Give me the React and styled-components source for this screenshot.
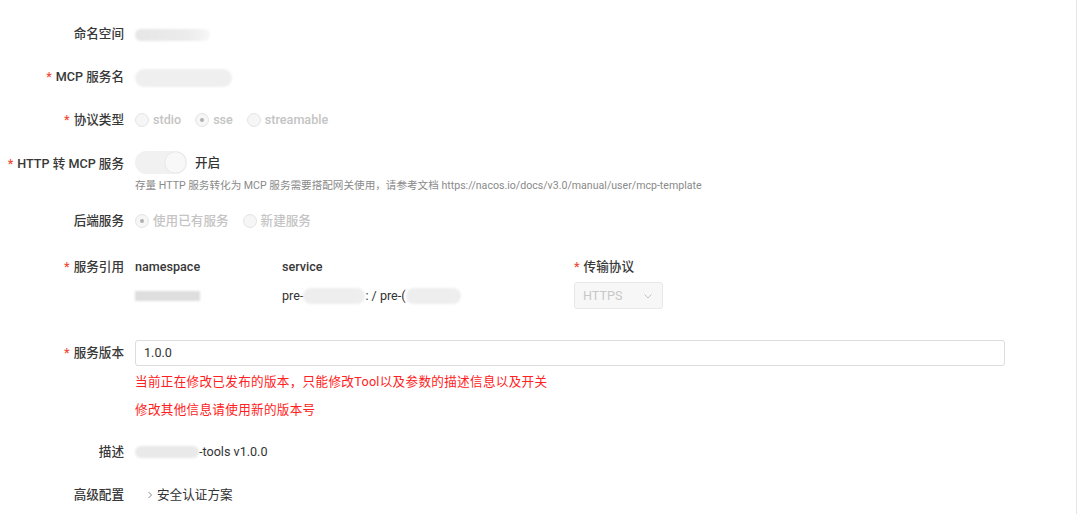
import React from "react";
import styled, { createGlobalStyle } from "styled-components";

const GlobalStyle = createGlobalStyle`
  html, body {
    margin: 0;
    padding: 0;
    background: #fff;
  }
  body {
    font-family: Roboto, "Noto Sans CJK SC", "Liberation Sans", sans-serif;
    font-size: 12.6px;
    color: #333;
  }
`;

const Page = styled.div`
  width: 1077px;
  min-height: 514px;
  border-right: 1px solid #e6e6e6;
  box-sizing: border-box;
  padding-top: 24px;
`;

const Item = styled.div`
  display: flex;
  align-items: flex-start;
  margin-bottom: ${(p) => p.$mb || 0}px;
`;

const Label = styled.div`
  width: 124px;
  margin-right: 11px;
  flex-shrink: 0;
  text-align: right;
  line-height: ${(p) => p.$lh || 20}px;
  padding-top: ${(p) => p.$pt || 0}px;
  font-weight: 500;
  color: #383838;
  white-space: nowrap;
`;

const Star = styled.span`
  color: #f04a35;
  margin-right: 4px;
  font-weight: 500;
`;

const Control = styled.div`
  flex: 1;
  line-height: 20px;
  min-width: 0;
`;

const Blur = styled.span`
  display: inline-block;
  vertical-align: middle;
  width: ${(p) => p.$w}px;
  height: ${(p) => p.$h}px;
  border-radius: ${(p) => p.$r || 0}px;
  background: ${(p) => p.$bg || "#ececec"};
  filter: blur(1px);
`;

const RadioGroup = styled.div`
  display: flex;
  align-items: center;
  height: 20px;
`;

const RadioItem = styled.label`
  display: flex;
  align-items: center;
  margin-right: 14px;
  color: #c4c4c4;
  font-weight: 500;
`;

const RadioCircle = styled.span`
  width: 14px;
  height: 14px;
  border-radius: 50%;
  border: 1px solid #e4e4e4;
  background: #f6f6f6;
  box-sizing: border-box;
  margin-right: 4px;
  display: flex;
  align-items: center;
  justify-content: center;
  &::after {
    content: "";
    display: ${(p) => (p.$checked ? "block" : "none")};
    width: 4px;
    height: 4px;
    border-radius: 50%;
    background: #b0b0b0;
  }
`;

const SwitchRow = styled.div`
  display: flex;
  align-items: center;
  height: 23px;
`;

const Switch = styled.span`
  width: 52px;
  height: 23px;
  border-radius: 12px;
  background: #f1f1f1;
  display: flex;
  align-items: center;
  justify-content: flex-end;
  padding: 1px;
  box-sizing: border-box;
  &::after {
    content: "";
    width: 21px;
    height: 21px;
    border-radius: 50%;
    background: #f8f8f8;
    box-shadow: 0 0 1px rgba(0, 0, 0, 0.18);
  }
`;

const SwitchText = styled.span`
  margin-left: 8px;
  font-weight: 500;
  color: #333;
`;

const Help = styled.div`
  margin-top: 4px;
  font-size: 10.6px;
  line-height: 16px;
  color: #8a8a8a;
  white-space: nowrap;
`;

const RefGrid = styled.div`
  display: grid;
  grid-template-columns: 147px 292px auto;
  grid-template-rows: 20px 27px;
  row-gap: 5px;
  align-items: center;
`;

const ColHead = styled.div`
  font-weight: 500;
  color: #383838;
`;

const Cell = styled.div`
  display: flex;
  align-items: center;
  color: #333;
`;

const Select = styled.div`
  width: 89px;
  height: 27px;
  box-sizing: border-box;
  border: 1px solid #e8e8e8;
  border-radius: 3px;
  background: #f7f7f7;
  display: flex;
  align-items: center;
  justify-content: space-between;
  padding: 0 9px 0 8px;
  color: #c8c8c8;
`;

const Input = styled.div`
  width: 870px;
  height: 26px;
  box-sizing: border-box;
  border: 1px solid #dcdcdc;
  border-radius: 3px;
  display: flex;
  align-items: center;
  padding-left: 8px;
  color: #333;
`;

const Warn = styled.div`
  color: #ff2121;
  line-height: 20px;
  letter-spacing: 0.3px;
  margin-top: ${(p) => p.$mt}px;
`;

const Collapse = styled.div`
  display: flex;
  align-items: center;
  padding-left: 10px;
  color: #333;
`;

const CollapseTitle = styled.span`
  margin-left: 2px;
`;

const Chevron = ({ dir = "down", size = 10, color = "#c4c4c4" }) => (
  <svg width={size} height={size} viewBox="0 0 10 10" fill="none">
    {dir === "down" ? (
      <path d="M1.5 3.5 L5 7 L8.5 3.5" stroke={color} strokeWidth="1" />
    ) : (
      <path d="M3.5 2 L6.5 5 L3.5 8" stroke={color} strokeWidth="1" />
    )}
  </svg>
);

const Radio = ({ checked, children }) => (
  <RadioItem>
    <RadioCircle $checked={checked} />
    {children}
  </RadioItem>
);

export default function App() {
  return (
    <>
      <GlobalStyle />
      <Page>
        <Item $mb={23}>
          <Label>命名空间</Label>
          <Control>
            <Blur
              $w={75}
              $h={12}
              $r={6}
              $bg="linear-gradient(90deg, #e6e6e6 0%, #ececec 70%, #f7f7f7 100%)"
            />
          </Control>
        </Item>

        <Item $mb={23}>
          <Label>
            <Star>*</Star>MCP 服务名
          </Label>
          <Control>
            <Blur $w={97} $h={18} $r={9} $bg="#efefef" />
          </Control>
        </Item>

        <Item $mb={21}>
          <Label>
            <Star>*</Star>协议类型
          </Label>
          <Control>
            <RadioGroup>
              <Radio>stdio</Radio>
              <Radio checked>sse</Radio>
              <Radio>streamable</Radio>
            </RadioGroup>
          </Control>
        </Item>

        <Item $mb={17}>
          <Label $lh={23} $pt={1}>
            <Star>*</Star>HTTP 转 MCP 服务
          </Label>
          <Control>
            <SwitchRow>
              <Switch />
              <SwitchText>开启</SwitchText>
            </SwitchRow>
            <Help>
              存量 HTTP 服务转化为 MCP 服务需要搭配网关使用，请参考文档
              https://nacos.io/docs/v3.0/manual/user/mcp-template
            </Help>
          </Control>
        </Item>

        <Item $mb={26}>
          <Label>后端服务</Label>
          <Control>
            <RadioGroup>
              <Radio checked>使用已有服务</Radio>
              <Radio>新建服务</Radio>
            </RadioGroup>
          </Control>
        </Item>

        <Item $mb={31}>
          <Label>
            <Star>*</Star>服务引用
          </Label>
          <Control>
            <RefGrid>
              <ColHead>namespace</ColHead>
              <ColHead>service</ColHead>
              <ColHead>
                <Star>*</Star>传输协议
              </ColHead>
              <Cell>
                <Blur $w={65} $h={10} $bg="#dedede" />
              </Cell>
              <Cell>
                pre-
                <Blur $w={62} $h={16} $r={8} $bg="#eeeeee" />
                : / pre-(
                <Blur $w={55} $h={16} $r={8} $bg="#eeeeee" />
              </Cell>
              <Cell>
                <Select>
                  HTTPS
                  <Chevron />
                </Select>
              </Cell>
            </RefGrid>
          </Control>
        </Item>

        <Item $mb={22}>
          <Label $lh={26}>
            <Star>*</Star>服务版本
          </Label>
          <Control>
            <Input>1.0.0</Input>
            <Warn $mt={6}>
              当前正在修改已发布的版本，只能修改Tool以及参数的描述信息以及开关
            </Warn>
            <Warn $mt={8}>修改其他信息请使用新的版本号</Warn>
          </Control>
        </Item>

        <Item $mb={23}>
          <Label>描述</Label>
          <Control>
            <Cell>
              <Blur $w={64} $h={12} $r={6} $bg="#e9e9e9" />
              -tools v1.0.0
            </Cell>
          </Control>
        </Item>

        <Item>
          <Label>高级配置</Label>
          <Control>
            <Collapse>
              <Chevron dir="right" size={10} color="#888" />
              <CollapseTitle>安全认证方案</CollapseTitle>
            </Collapse>
          </Control>
        </Item>
      </Page>
    </>
  );
}
